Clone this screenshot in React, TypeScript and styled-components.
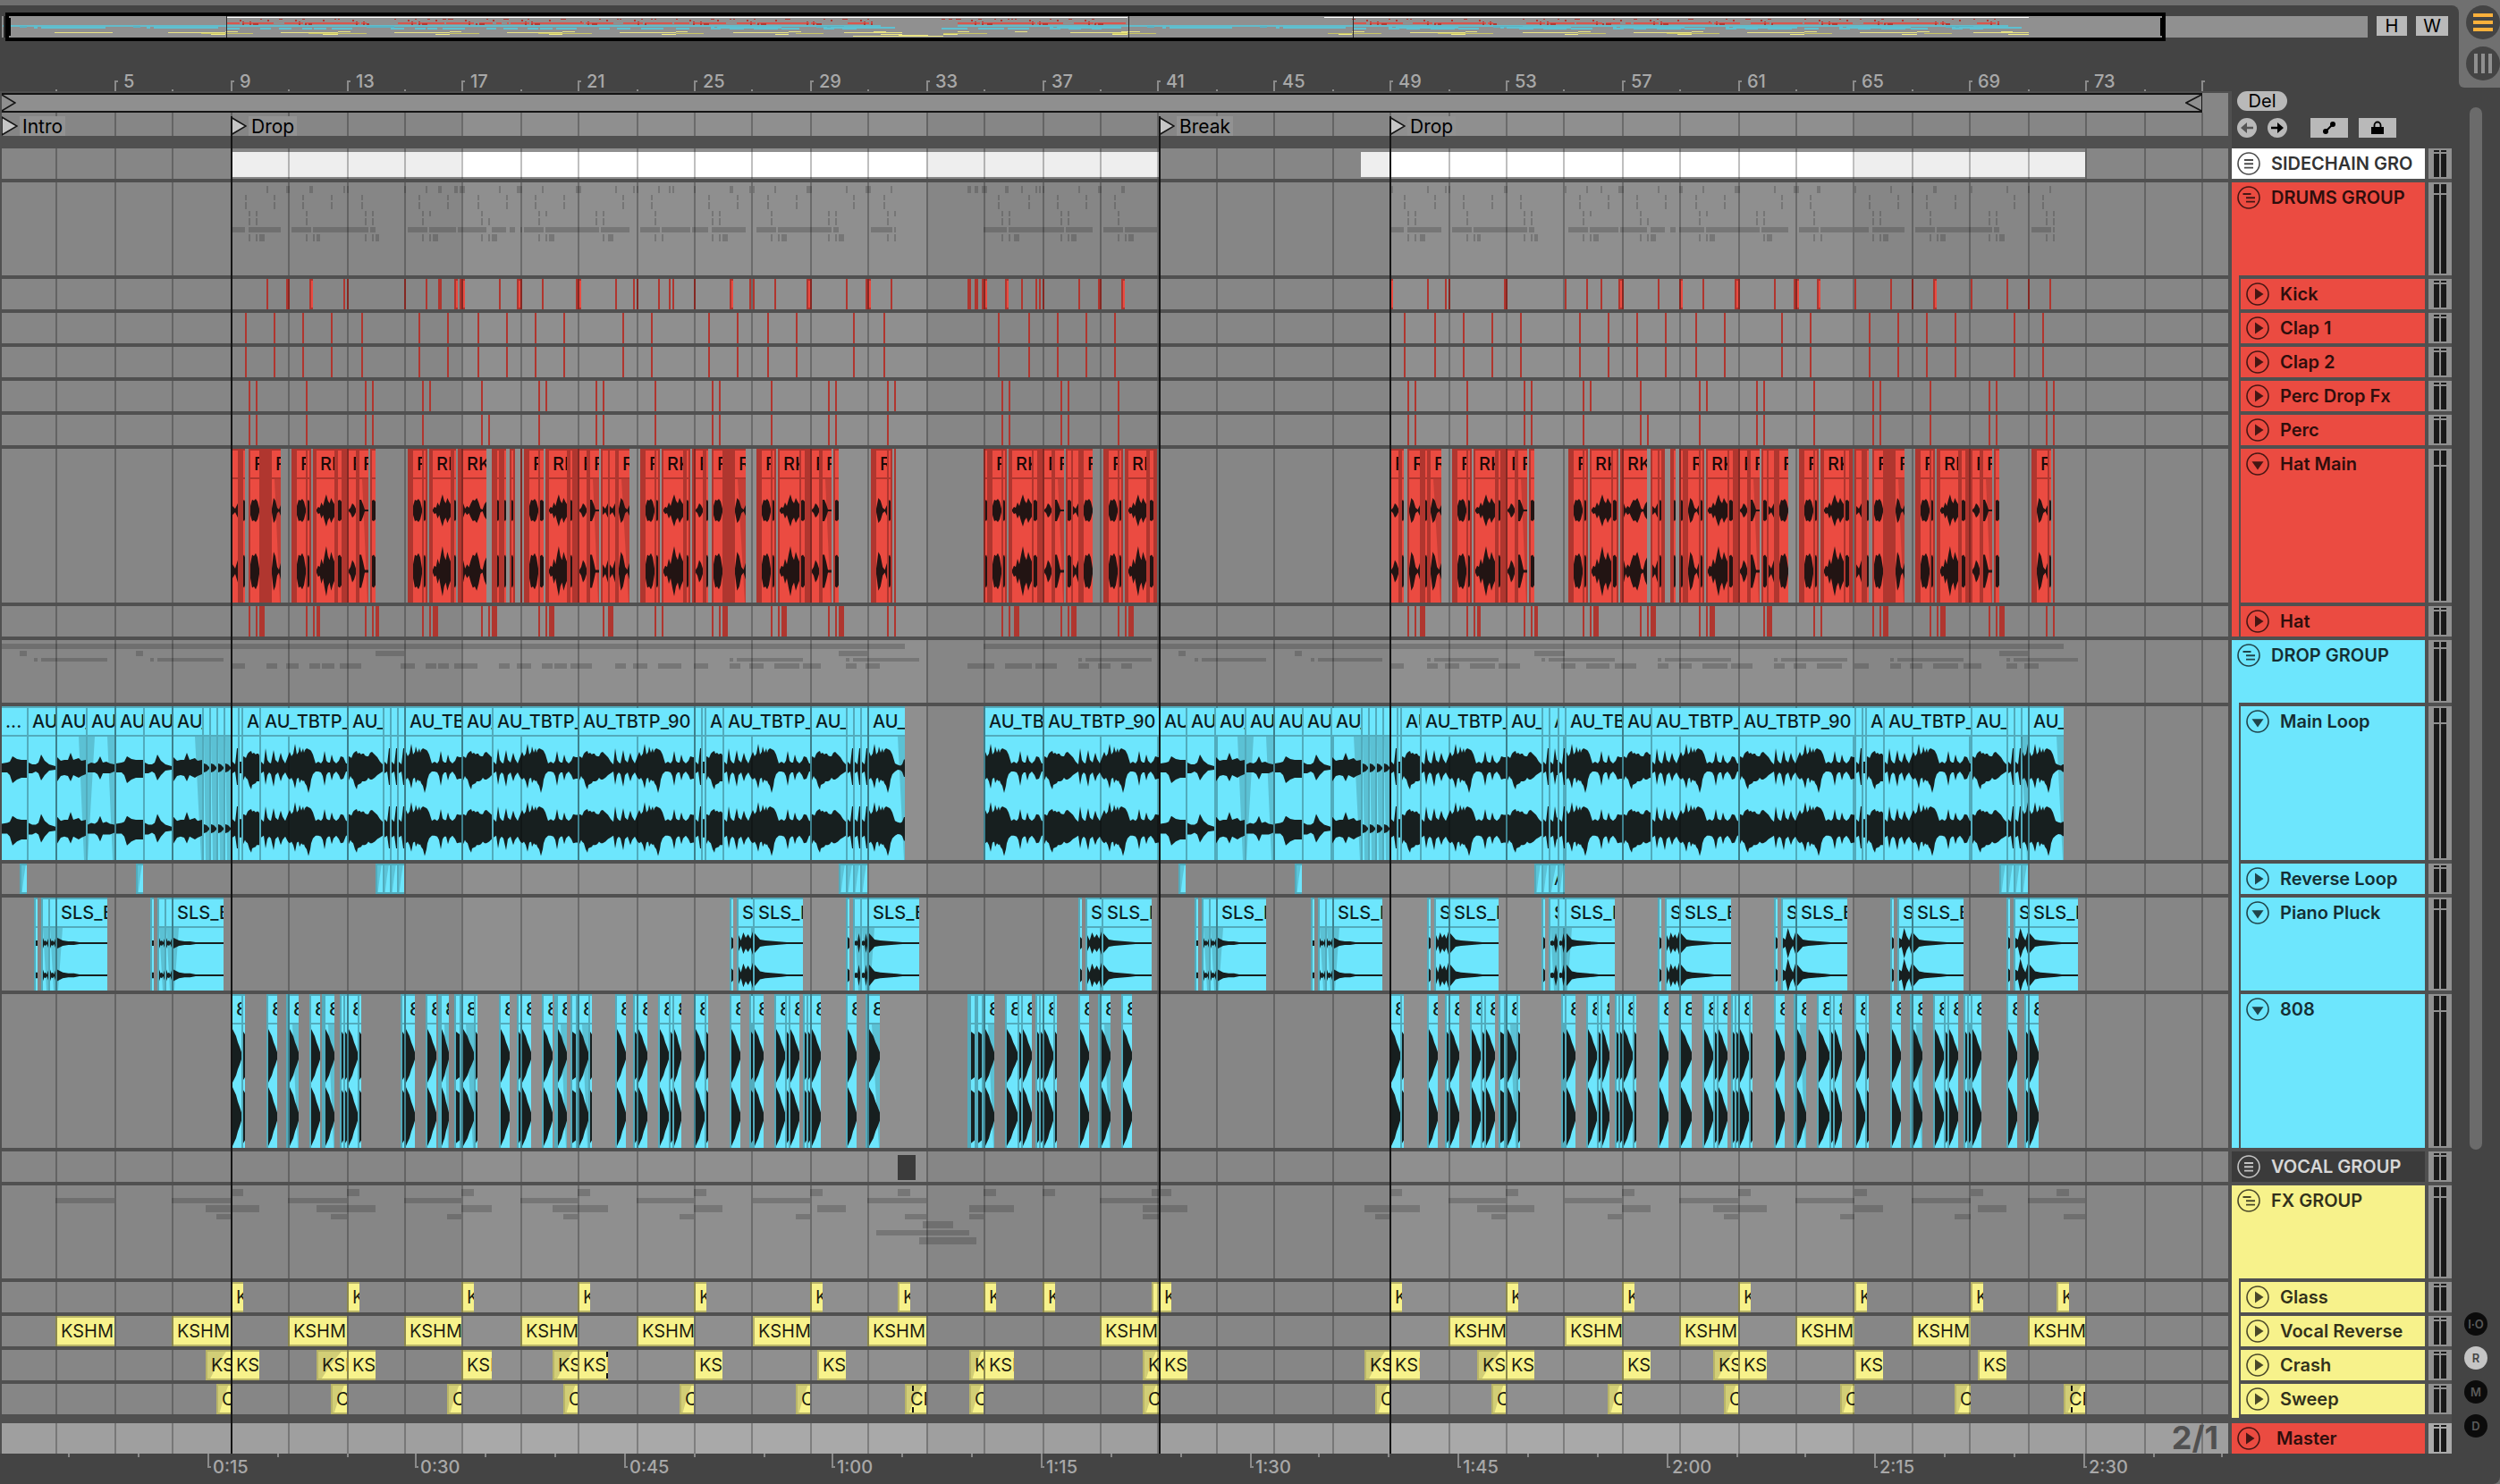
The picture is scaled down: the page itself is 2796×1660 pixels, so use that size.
import React from "react";
import styled, { createGlobalStyle } from "styled-components";

/* ---------- palette ---------- */
const c = {
  frame: "#707070",
  panel: "#444444",
  gap: "#505050",
  lane: "#8f8f8f",
  laneDim: "#868686",
  ink: "#171f1f",
  control: "#b9b9b9",
  red: "#eb4b41",
  redEdge: "#b0362f",
  blue: "#6de6fd",
  blueEdge: "#52abbc",
  yellow: "#f7f28b",
  yellowEdge: "#b9b568",
};
const sans = `Inter, "Liberation Sans", sans-serif`;

/* ---------- timeline geometry ---------- */
const START = 2;
const SPAN = 2490;
const at = (x: number) => `${((x - START) / SPAN) * 100}%`;
const wide = (w: number) => `${(w / SPAN) * 100}%`;
const even = (v: number) => Math.round(v / 2) * 2;
const barX = (bar: number) => Math.max(START, even(32.42 * (bar - 1) - 2));
const gridBars = Array.from({ length: 38 }, (_, i) => 3 + i * 2);

/* ---------- clip data ---------- */
type Seg = { x: number; w: number; solid: boolean; before: number };

// "326 d6 b10" reads: start at 326, a 6 wide edge, then a 10 wide clip face
const runs = (text: string): Seg[] =>
  text
    .trim()
    .split("|")
    .flatMap((run) => {
      const [head, ...parts] = run.trim().split(/\s+/);
      let x = Number(head);
      let before = 0;
      return parts.map((p) => {
        const w = Number(p.slice(1));
        const seg = { x, w, solid: p[0] === "d", before };
        before = seg.solid ? w : 0;
        x += w;
        return seg;
      });
    });

// every list is: first edge, further cuts, end
const cuts = (...lists: number[][]): Seg[] =>
  lists.flatMap((list) =>
    list.slice(0, -1).flatMap((x, i) => {
      const edge = x === START ? 0 : 2;
      const face = { x: x + edge, w: list[i + 1] - x - edge, solid: false, before: edge };
      return edge ? [{ x, w: 2, solid: true, before: 0 }, face] : [face];
    })
  );

const hits = (text: string): Seg[] =>
  text
    .trim()
    .split(/\s+/)
    .flatMap((item) => {
      const [x, w] = item.split(/[:=]/).map(Number);
      if (!w || item.includes("=")) return [{ x, w: w || 2, solid: true, before: 0 }];
      return cuts([x, x + w]);
    });

const kick = hits(`298 320=4 346:4 384 388 452 476 490=4 508:4 514=2 516:4 558 578:4 582 606 644=2 646:4
 688 708 712 736 748 752 776 816:4 838 842 866 902:4 906 946 968=2 970:4 996 1082=4 1090=4 1098=2 1100:4
 1124:4 1142 1158 1162 1166 1206 1228=4 1254:4 1554:4 1596 1616 1620 1682=4 1750 1774 1790 1810:4 1814
 1854 1878:4 1904 1940:4 1944 1984 2006=2 2008:4 2032:4 2074 2114 2138 2162:4 2204 2244 2268 2292`);
const clap = hits(`274 306 338 370 404 468 500 534 566 598 630 696 728 792 824 858 890 954 988 1116 1150 1182
 1214 1246 1570 1604 1636 1668 1700 1766 1798 1830 1862 1896 1928 1992 2024 2090 2122 2154 2186 2252 2284`);
const percFx = hits(`278 286 342 408 416 472 480 538 602 610 666 674 732 796 804 862 926 934 992 1000 1120 1128
 1186 1194 1250 1574 1582 1640 1704 1712 1770 1778 1834 1900 1908 1964 1972 2028 2094 2102 2158 2224 2232 2288 2296`);
const perc = hits(`278 286 342 408 416 472 538 546 602 666 674 732 796 804 862 926 934 992 1120 1128 1186 1194
 1250 1574 1582 1640 1704 1712 1770 1834 1842 1900 1964 1972 2028 2094 2102 2158 2224 2232 2288 2296`);
const hat = hits(`278 286 290=6 342 350 354=4 408 416 420=4 472 480 484=6 538 546 550=6 602 610 614=6 674 680=6
 732 740 796 804 808=6 862 870 874=6 926 934 938=6 992 1000 1120 1128 1134=6 1186 1194 1198=6 1250 1258 1262=6
 1574 1582 1588=6 1640 1648 1652=4 1704 1712 1716=4 1770 1778 1782=6 1834 1842 1846=6 1900 1908 1912=6 1972
 1976=6 2028 2036 2094 2102 2106=6 2158 2166 2170=6 2224 2232 2236=6 2288 2296`);
const hatMain = runs(`260 b6 d6 b2 | 278 d2 b10 d14 b10 | 326 d6 b10 d2 b2 d2 | 350 d4 b20 d4 b4 d8 b8 d4 b10 |
 414 d2 b4 | 456 d6 b10 d2 b2 d2 | 480 d4 b20 d4 b2 | 512 d6 b26 | 550 d6 b2 d6 b2 | 570 d2 b2 d2 | 582 d2 |
 586 d6 b10 d2 b4 | 610 d4 b20 d4 b2 d8 b8 d4 b10 | 672 d2 b6 d2 b6 d4 b12 | 716 d6 b10 d2 b2 d2 |
 740 d2 b22 d4 b2 d2 | 774 d4 b8 d4 b2 | 796 d2 b10 d14 b12 | 846 d6 b10 d2 b2 d2 |
 870 d2 b22 d2 b4 d8 b8 d4 b10 | 932 d2 b4 | 974 d6 b12 d2 b2 d2 | 1000 d2 | 1100 d2 b2 d6 b10 d2 b2 d2 |
 1128 d4 b22 d2 b4 d8 b8 d4 b10 | 1192 d2 b4 d2 b6 d6 b10 | 1234 d6 b10 d2 b2 d2 | 1258 d4 b20 d4 b4 d4 |
 1556 b8 d4 b2 | 1574 d2 b12 d6 b2 d4 b12 | 1624 d6 b10 d2 b2 d2 | 1648 d2 b22 d4 b2 d8 b8 d4 b10 |
 1710 d2 b4 | 1754 d6 b10 d2 b2 d2 | 1778 d2 b22 d2 b4 d2 | 1812 d4 b26 | 1846 d2 b6 d2 b2 d4 | 1868 d4 b2 |
 1878 d2 b2 d6 b12 d2 b2 d2 | 1908 d2 b22 d2 b4 d8 b8 d4 b10 | 1970 d2 b4 d2 b6 d6 b10 |
 2012 d6 b10 d2 b2 d2 | 2036 d4 b22 d2 b4 d4 | 2074 d2 b6 d6 b2 | 2094 d2 b10 d14 b10 |
 2142 d6 b10 d2 b2 d2 | 2166 d4 b20 d4 b4 d8 b8 d4 b10 | 2230 d2 b4 | 2272 d6 b12 d2 b2 | 2296 d2`);
const mainLoop = cuts(
  [2, 30, 62, 96, 128, 160, 192, 226, 234, 242, 250, 258, 266, 270, 290, 388, 428, 436, 444, 452, 516, 550,
    646, 776, 784, 788, 808, 906, 946, 954, 962, 970, 1012],
  [1100, 1166, 1296, 1326, 1358, 1392, 1424, 1456, 1488, 1522, 1530, 1538, 1546, 1554, 1562, 1566, 1588, 1684,
    1724, 1732, 1742, 1750, 1814, 1846, 1944, 2074, 2082, 2086, 2106, 2204, 2244, 2252, 2260, 2268, 2308]
);
const reverse = cuts([22, 30], [152, 160], [420, 428, 436, 444, 452], [938, 946, 954, 962, 970], [1318, 1326],
  [1448, 1456], [1716, 1724, 1732, 1742, 1750], [2236, 2244, 2252, 2260, 2268]);
const piano = cuts([38, 42], [46, 54, 62, 120], [168, 172], [176, 184, 192, 250], [816, 820], [824, 842, 898],
  [946, 950], [954, 962, 970, 1028], [1206, 1210], [1214, 1232, 1288], [1336, 1340], [1344, 1352, 1360, 1416],
  [1466, 1470], [1474, 1482, 1490, 1546], [1596, 1600], [1604, 1620, 1676], [1724, 1728], [1732, 1742, 1750, 1806],
  [1854, 1858], [1862, 1878, 1936], [1984, 1988], [1992, 2008, 2066], [2114, 2118], [2122, 2138, 2196],
  [2244, 2248], [2252, 2268, 2324]);
const bass = runs(`260 b10 d2 b2 | 298 d2 b10 | 320 d4 b10 | 346 d2 b10 | 360 d4 b10 | 380 d2 b2 d2 b2 d2 b10 d2 b2 |
 448 d2 b2 d2 b10 | 476 d2 b10 | 490 d4 b8 | 508 d2 b4 d4 b12 d2 b2 | 558 d2 b10 | 578 d2 b2 d2 b10 |
 606 d2 b10 | 620 d4 b10 | 638 d2 b4 d4 b10 d2 b2 | 688 d2 b10 | 708 d2 b2 d2 b10 | 736 d2 b10 d2 b2 d2 b8 |
 776 d2 b10 d2 b2 | 816 d2 b10 | 838 d2 b2 d2 b10 | 866 d2 b10 d2 b2 d2 b10 | 898 d2 b2 d2 b2 d2 b10 |
 946 d2 b10 | 968 d4 b12 | 1082 d4 b4 d4 b4 d4 b10 | 1124 d2 b12 d2 b2 d2 b10 | 1158 d2 b2 d2 b2 d2 b10 d2 b2 |
 1206 d2 b10 | 1228 d4 b10 | 1254 d2 b10 | 1556 b10 d2 b2 | 1596 d2 b10 | 1616 d2 b2 d2 b10 |
 1644 d2 b10 d2 b2 d2 b10 | 1676 d2 b4 d4 b10 d2 b2 | 1746 d2 b2 d2 b10 | 1774 d2 b10 d2 b2 d2 b8 |
 1806 d2 b2 d2 b2 d2 b10 d2 b2 | 1854 d2 b10 | 1878 d2 b12 | 1904 d2 b10 d2 b2 d2 b10 |
 1936 d2 b2 d2 b2 d2 b10 d2 b2 | 1984 d2 b10 | 2006 d4 b10 | 2032 d2 b12 d2 b2 d2 b8 | 2074 d2 b10 d2 b2 |
 2114 d2 b10 | 2136 d4 b10 | 2162 d2 b10 d2 b2 d2 b10 | 2196 d2 b2 d2 b2 d2 b10 | 2244 d2 b10 | 2264 d2 b2 d2 b10`);
const glass = cuts([258, 272], [388, 402], [516, 530], [646, 660], [776, 790], [906, 920], [1004, 1018], [1100, 1114],
  [1166, 1180], [1288, 1296, 1310], [1554, 1568], [1684, 1698], [1814, 1828], [1944, 1958], [2074, 2088],
  [2204, 2218], [2300, 2314]);
const vocalReverse = cuts([62, 128], [192, 258], [322, 388], [452, 516], [582, 646], [712, 776], [842, 906],
  [970, 1036], [1230, 1296], [1620, 1684], [1750, 1814], [1878, 1944], [2008, 2074], [2138, 2204], [2268, 2332]);
const crash = cuts([230, 258, 290], [354, 388, 420], [516, 550], [618, 646, 680], [776, 808], [914, 946],
  [1084, 1100, 1134], [1278, 1296, 1328], [1526, 1554, 1588], [1652, 1684, 1716], [1814, 1846], [1916, 1944, 1976],
  [2074, 2106], [2212, 2244]);
const crashFades = [230, 354, 618, 1084, 1278, 1526, 1652, 1916];
const sweep = cuts([242, 258], [370, 388], [500, 516], [630, 646], [760, 776], [890, 906], [1012, 1036], [1084, 1100],
  [1278, 1296], [1538, 1554], [1668, 1684], [1798, 1814], [1928, 1944], [2058, 2074], [2186, 2204], [2308, 2332]);
const fxExtra = [[[1032, 1066]], [[980, 1084]], [[1028, 1092]]];
const sidechain: [number, number, string][] = [
  [260, 516, "#eeeeee"], [516, 1036, "#ffffff"], [1036, 1296, "#eeeeee"],
  [1522, 1554, "#eeeeee"], [1554, 2074, "#ffffff"], [2074, 2332, "#eeeeee"],
];

const spans = (segs: Seg[]): number[][] =>
  segs.reduce<number[][]>((out, s) => {
    const last = out[out.length - 1];
    if (last && s.x <= last[1]) last[1] = Math.max(last[1], s.x + s.w);
    else out.push([s.x, s.x + s.w]);
    return out;
  }, []);

/* ---------- wave forms ---------- */
type Point = [number, number, number];
// offset, upper and lower amplitude over four bars of the loop
const loop: Point[] = [
  [0, 13, 14], [2, 12, 9], [3, 11, 11], [5, 16, 13], [7, 18, 20], [9, 19, 24], [10, 16, 19], [12, 17, 18], [14, 15, 17],
  [15, 16, 15], [17, 16, 15], [18, 14, 15], [20, 13, 14], [22, 13, 11], [24, 17, 13], [26, 18, 13], [29, 15, 11],
  [32, 12, 8], [35, 7, 6], [38, 4, 4], [40, 22, 19], [42, 9, 8], [44, 6, 5], [46, 5, 7], [49, 20, 21], [51, 9, 8],
  [54, 6, 5], [57, 17, 15], [59, 10, 9], [62, 5, 5], [65, 13, 11], [67, 18, 13], [69, 13, 11], [71, 16, 15],
  [73, 27, 23], [75, 15, 12], [77, 18, 11], [78, 24, 17], [80, 17, 13], [82, 22, 15], [83, 17, 14], [84, 20, 17],
  [86, 22, 20], [88, 21, 28], [90, 20, 20], [91, 19, 13], [93, 15, 7], [96, 5, 4], [99, 7, 4], [102, 5, 5],
  [104, 8, 9], [106, 19, 20], [108, 8, 8], [110, 6, 5], [112, 6, 5], [114, 15, 14], [116, 8, 7], [119, 5, 4],
  [122, 8, 8], [124, 13, 13], [127, 12, 12], [130, 5, 4],
];
const intro: Point[][] = [
  [[0, 5, 5], [6, 6, 5], [9, 7, 8], [12, 13, 17], [17, 10, 13], [22, 9, 11], [28, 9, 11]],
  [[0, 6, 6], [4, 4, 6], [8, 4, 4], [11, 6, 6], [14, 15, 14], [18, 8, 8], [23, 4, 3], [30, 2, 2]],
  [[0, 12, 15], [4, 8, 9], [8, 9, 8], [12, 9, 9], [15, 17, 15], [18, 9, 8], [24, 11, 11], [27, 8, 9], [32, 9, 7]],
  [[0, 4, 5], [4, 6, 5], [8, 5, 5], [11, 7, 7], [14, 13, 13], [17, 6, 6], [21, 7, 6], [25, 5, 6], [30, 4, 4]],
];
const even2 = (values: number[], w: number): Point[] =>
  values.map((v, i) => [(i * w) / (values.length - 1), v, v] as Point);

const outline = (x: number, w: number, pts: Point[], mid: number, gain: number, floor: number) => {
  const kept = pts.filter((p) => p[0] <= w);
  const last = kept[kept.length - 1];
  if (last[0] < w) kept.push([w, last[1], last[2]]);
  const up = kept.map((p) => `${x + p[0] - START},${(mid - p[1] * gain - floor).toFixed(1)}`);
  const down = kept.map((p) => `${x + p[0] - START},${(mid + p[2] * gain + floor).toFixed(1)}`).reverse();
  return `M${[...up, ...down].join("L")}Z`;
};
const stereo = (x: number, w: number, pts: Point[], mids: number[], gain = 1, floor = 0) =>
  outline(x, w, pts, mids[0], 1, 0) + outline(x, w, pts, mids[1], gain, floor);
const fade = (a: number, b: number, d: number, e: number, h: number) =>
  `M${a - START},34L${b - START},34L${e - START},${h}L${d - START},${h}Z`;

type Drawing = { waves: string; fades: string };
const MIDS = [69, 137];

const drawHat = (): Drawing => {
  let waves = "";
  let fades = "";
  hatMain.filter((s) => !s.solid).forEach(({ x, w, before }) => {
    let v = [11, 12, 10];
    if (w >= 26) v = [8, 2, 5, 3, 8, 12, 11, 14, 9, 2, 1, 7, 10];
    else if (w >= 20) v = [1, 4, 3, 9, 5, 12, 18, 11, 8, 14, 10, 7];
    else if (w >= 10 && (before === 14 || w === 12)) v = [2, 14, 11, 3, 1, 6];
    else if (w === 10 && before === 4) v = [12, 12, 7, 1, 1, 1];
    else if (w >= 10) v = [5, 12, 11, 13, 10, 2];
    else if (w === 8) v = [1, 3, 8, 6, 2];
    else if (w === 6) v = [5, 2, 8];
    waves += stereo(x, w, even2(v, w), MIDS, 1.55);
    if (w >= 10 && w <= 12 && (before === 4 || before === 14))
      fades += fade(x + 3, x + w, x + w - 1, x + w, 172);
  });
  return { waves, fades };
};

const drawLoop = (): Drawing => {
  let waves = "";
  let fades = "";
  let bar = 0;
  mainLoop.filter((s) => !s.solid).forEach(({ x, w }) => {
    const inIntro = x < 258 || (x > 1296 && x < 1554);
    if (inIntro && w < 10) {
      waves += stereo(x, w, [[0, 5, 5], [3, 4, 4], [6, 1, 1]], MIDS);
      fades += fade(x, x + w, x + w - 1, x + w, 172) + fade(x, x + 4, x + 2, x + w, 172);
      bar = 0;
      return;
    }
    if (inIntro) {
      waves += stereo(x, w, intro[bar % 4], MIDS, 1.1);
      if (bar === 2) fades += fade(x + w - 8, x + w, x + w - 2, x + w, 172);
      if (bar === 3) fades += fade(x, x + 8, x, x, 172) + fade(x + w - 8, x + w, x + w - 2, x + w, 172);
      if (bar === 6) fades += fade(x + w - 8, x + w, x + w - 1, x + w, 172);
      bar += 1;
      return;
    }
    let from = 0;
    const tail = x > 2260 || (x > 968 && x < 1012);
    if (w > 90 && w < 100) from = 35;
    else if ((w > 60 && w < 70) || tail) from = 67;
    else if (w < 9) from = 35;
    const pts = loop
      .filter((p) => p[0] >= from)
      .map((p) => [p[0] - from, p[1], p[2]] as Point);
    if (pts[0][0] > 0) pts.unshift([0, pts[0][1], pts[0][2]]);
    const shaped = tail
      ? pts.map((p) => (p[0] > 30 ? ([p[0], p[1] * 0.5, p[2] * 0.5] as Point) : p))
      : pts;
    if (tail) fades += fade(x + w - 8, x + w, x + w - 1, x + w, 172);
    waves += stereo(x, w, shaped, MIDS, 0.95, 4);
  });
  return { waves, fades };
};

const drawPiano = (): Drawing => {
  let waves = "";
  let fades = "";
  const mids = [51, 87];
  const faces = piano.filter((s) => !s.solid);
  faces.forEach(({ x, w }, i) => {
    const soft = i > 0 && faces[i - 1].w < 10;
    const quiet = x < 260 || (x > 1296 && x < 1554);
    let v = [3, 3];
    if (w > 30) v = quiet ? [6, 3, 2, 2, 1, 1, 1, 1, 1, 1] : [11, 4, 3, 2.5, 2, 1.5, 1, 1, 1, 1];
    else if (w > 12) v = x > 1980 ? [6, 4, 17, 8, 3, 12] : [9, 3, 12, 6, 10, 5, 13];
    else if (w > 4) v = quiet ? [6, 2, 3, 1, 5] : [2, 3, 2, 11, 3];
    else if (!quiet) v = [7, 5];
    waves += stereo(x, w, even2(v, w), mids, 1.1);
    if (w > 2 && w < 10) fades += fade(x, x + w, x + w - 1, x + w, 104) + fade(x, x + w, x + 4, x + w, 104);
    if (w > 30 && soft) fades += fade(x, x + 6, x, x + 1, 104);
  });
  return { waves, fades };
};

const drawBass = (): Drawing => {
  let waves = "";
  let fades = "";
  bass.filter((s) => !s.solid).forEach(({ x, w, before }) => {
    const v = w > 4 ? [30, 26, 22, 15, 10, 4] : [27, 24];
    waves += stereo(x, w, even2(v, w), MIDS, 1.1);
    if (w >= 8 && before === 4) fades += fade(x + 3, x + w, x + w - 1, x + w, 172);
  });
  return { waves, fades };
};

/* ---------- tracks ---------- */
type Tone = { fill: string; edge: string };
const red: Tone = { fill: c.red, edge: c.redEdge };
const blue: Tone = { fill: c.blue, edge: c.blueEdge };
const yellow: Tone = { fill: c.yellow, edge: c.yellowEdge };
const white: Tone = { fill: "#ffffff", edge: "#eeeeee" };
const dark: Tone = { fill: "#3b3b3b", edge: "#3b3b3b" };

type Track = {
  name: string;
  tone: Tone;
  height: number;
  peak: number;
  icon: "closed" | "open" | "play" | "down";
  child?: boolean;
  last?: boolean;
  clips?: Seg[];
  label?: string;
  drawing?: Drawing;
  rows?: number[][][];
  blocks?: [number, number, string][];
  fadeAll?: boolean;
  fadeAt?: number[];
  marks?: number[];
};

const tracks: Track[] = [
  { name: "SIDECHAIN GRO", tone: white, height: 34, peak: 2, icon: "closed", blocks: sidechain },
  { name: "DRUMS GROUP", tone: red, height: 104, peak: 10, icon: "open",
    rows: [kick, clap, clap, percFx, perc, hatMain, hat].map(spans) },
  { name: "Kick", tone: red, height: 34, peak: 2, icon: "play", child: true, clips: kick },
  { name: "Clap 1", tone: red, height: 34, peak: 2, icon: "play", child: true, clips: clap },
  { name: "Clap 2", tone: red, height: 34, peak: 2, icon: "play", child: true, clips: clap },
  { name: "Perc Drop Fx", tone: red, height: 34, peak: 2, icon: "play", child: true, clips: percFx },
  { name: "Perc", tone: red, height: 34, peak: 2, icon: "play", child: true, clips: perc },
  { name: "Hat Main", tone: red, height: 172, peak: 16, icon: "down", child: true, clips: hatMain, label: "RK", drawing: drawHat() },
  { name: "Hat", tone: red, height: 34, peak: 2, icon: "play", child: true, clips: hat },
  { name: "DROP GROUP", tone: blue, height: 70, peak: 6, icon: "open",
    rows: [mainLoop, reverse, piano, bass].map(spans) },
  { name: "Main Loop", tone: blue, height: 172, peak: 16, icon: "down", child: true, clips: mainLoop, label: "AU_TBTP_90", drawing: drawLoop() },
  { name: "Reverse Loop", tone: blue, height: 34, peak: 2, icon: "play", child: true, clips: reverse, label: "A", fadeAll: true },
  { name: "Piano Pluck", tone: blue, height: 104, peak: 10, icon: "down", child: true, clips: piano, label: "SLS_B", drawing: drawPiano() },
  { name: "808", tone: blue, height: 172, peak: 16, icon: "down", child: true, clips: bass, label: "808", drawing: drawBass() },
  { name: "VOCAL GROUP", tone: dark, height: 34, peak: 2, icon: "closed", blocks: [[1004, 1024, "#3b3b3b"]] },
  { name: "FX GROUP", tone: yellow, height: 104, peak: 10, icon: "open",
    rows: [...[glass, vocalReverse, crash, sweep].map(spans), ...fxExtra] },
  { name: "Glass", tone: yellow, height: 34, peak: 2, icon: "play", child: true, clips: glass, label: "KS" },
  { name: "Vocal Reverse", tone: yellow, height: 34, peak: 2, icon: "play", child: true, clips: vocalReverse, label: "KSHMR" },
  { name: "Crash", tone: yellow, height: 34, peak: 2, icon: "play", child: true, clips: crash, label: "KSH", fadeAt: crashFades, marks: [678] },
  { name: "Sweep", tone: yellow, height: 34, peak: 2, icon: "play", child: true, last: true, clips: sweep, label: "CR", fadeAll: true, marks: [1020, 2316] },
];

const miniRows = [[4, 8], [14, 6], [22, 8], [32, 6], [40, 8], [50, 6], [58, 8]];
const miniRowsShort = [[4, 6], [12, 6], [20, 4], [26, 6]];
const locators = [
  { x: 2, name: "Intro" },
  { x: 258, name: "Drop" },
  { x: 1296, name: "Break" },
  { x: 1554, name: "Drop" },
];
const seconds = Array.from({ length: 32 }, (_, i) => i + 1);

/* ---------- styles ---------- */
const Global = createGlobalStyle`
  *, *::before, *::after { box-sizing: border-box; }
  body { margin: 0; background: ${c.frame}; font-family: ${sans}; font-size: 20px; line-height: 24px; color: #000; }
  button { margin: 0; padding: 0; border: 0; font: inherit; color: inherit; background: none; cursor: pointer; }
  svg { display: block; }
`;
const Window = styled.div`
  display: grid;
  grid-template-columns: minmax(0, 1fr) 46px;
  min-height: 100vh;
  padding-top: 6px;
  background: ${c.frame};
`;
const Main = styled.main`
  display: flex;
  flex-direction: column;
  min-width: 0;
  background: ${c.panel};
  border-top-right-radius: 8px;
`;
const OverviewBar = styled.header`
  display: grid;
  grid-template-columns: minmax(0, 1fr) 34px 36px;
  column-gap: 10px;
  align-items: start;
  padding: 12px 12px 8px 2px;
`;
const Overview = styled.div`
  position: relative;
  height: 24px;
  background: #909090;
`;
const OverviewMap = styled.svg`
  width: 100%;
  height: 24px;
`;
const ViewFrame = styled.div`
  position: absolute;
  top: -4px;
  bottom: -4px;
  left: 4px;
  width: 91.3%;
  border: 4px solid #000;
  &::before,
  &::after {
    content: "";
    position: absolute;
    top: 2px;
    bottom: 2px;
    width: 2px;
    background: #000;
  }
  &::before { left: 0; }
  &::after { right: 0; }
`;
const SquareButton = styled.button`
  height: 22px;
  font-size: 20px;
  line-height: 22px;
  background: ${c.control};
  display: grid;
  place-items: center;
`;
const Ruler = styled.div`
  height: 52px;
  padding-right: 258px;
`;
const RulerTrack = styled.div`
  position: relative;
  height: 100%;
  margin-left: 2px;
`;
const Tick = styled.span<{ $major?: boolean }>`
  position: absolute;
  bottom: 0;
  height: ${(p) => (p.$major ? 12 : 2)}px;
  width: ${(p) => (p.$major ? 4 : 2)}px;
  border-left: 2px solid #8a8a8a;
  border-top: ${(p) => (p.$major ? "2px solid #8a8a8a" : "0")};
`;
const TickLabel = styled.span`
  position: absolute;
  bottom: -1px;
  padding-left: 10px;
  font-weight: 500;
  color: #a8a8a8;
`;
const Arrangement = styled.section`
  position: relative;
  padding: 2px 8px 0 0;
  background: linear-gradient(to right, ${c.gap} calc(100% - 8px), ${c.panel} calc(100% - 8px));
`;
const Row = styled.div`
  display: grid;
  grid-template-columns: minmax(0, 1fr) 216px 26px;
  column-gap: 4px;
  padding-left: 2px;
`;
const banded = (lit: string, dim: string) =>
  `linear-gradient(to right, ${dim} ${at(516)}, ${lit} ${at(516)} ${at(1036)}, ${dim} ${at(1036)} ${at(1554)}, ${lit} ${at(1554)} ${at(2074)}, ${dim} ${at(2074)})`;
const NavRow = styled.div`
  display: grid;
  grid-template-columns: minmax(0, 1fr) 250px;
  padding-left: 2px;
`;
const NavLanes = styled.div`
  display: flex;
  flex-direction: column;
  padding-bottom: 14px;
`;
const LoopLane = styled.div`
  height: 22px;
  background: ${c.laneDim};
`;
const LoopBrace = styled.button`
  width: 98.85%;
  height: 22px;
  display: flex;
  justify-content: space-between;
  background: ${c.lane};
  border-top: 2px solid #141414;
  border-bottom: 2px solid #141414;
  border-right: 1px solid #141414;
`;
const LocatorLane = styled.div`
  position: relative;
  isolation: isolate;
  height: 26px;
  background: ${banded(c.lane, c.laneDim)};
`;
const LocatorButton = styled.button`
  position: absolute;
  z-index: 2;
  top: 4px;
  display: flex;
  gap: 2px;
  height: 22px;
  line-height: 23px;
`;
const LocatorName = styled.span`
  padding: 0 3px;
  font-size: 21px;
  background: #929292;
`;
const LocatorLines = styled.div`
  position: absolute;
  z-index: 3;
  top: 28px;
  bottom: 0;
  left: 2px;
  right: 258px;
  pointer-events: none;
`;
const LocatorLine = styled.i`
  position: absolute;
  top: 0;
  bottom: 0;
  width: 2px;
  background: #141414;
`;
const NavControls = styled.div`
  margin: -2px 0 0 4px;
  padding-left: 6px;
  display: flex;
  flex-direction: column;
  gap: 8px;
  background: ${c.panel};
`;
const ControlLine = styled.div`
  display: flex;
  align-items: center;
`;
const PillButton = styled.button`
  width: 56px;
  height: 22px;
  border-radius: 11px;
  font-size: 20px;
  line-height: 22px;
  background: ${c.control};
`;
const RoundButton = styled.button`
  width: 22px;
  height: 22px;
  margin-right: 12px;
  border-radius: 50%;
  background: ${c.control};
`;
const ModeButton = styled(SquareButton)`
  width: 42px;
  margin: 0 -2px 0 14px;
`;
const TrackList = styled.div`
  display: flex;
  flex-direction: column;
  gap: 4px;
`;
const Lane = styled.div<{ $height: number; $main?: boolean }>`
  position: relative;
  isolation: isolate;
  overflow: hidden;
  height: ${(p) => p.$height}px;
  background: ${(p) => (p.$main ? banded("#a9a9a9", "#9f9f9f") : banded(c.lane, c.laneDim))};
`;
const GridLine = styled.i`
  position: absolute;
  z-index: 1;
  top: 0;
  bottom: 0;
  width: 2px;
  background: rgba(0, 0, 0, 0.25);
`;
const Edge = styled.i<{ $tone: Tone }>`
  position: absolute;
  top: 0;
  bottom: 0;
  background: ${(p) => p.$tone.edge};
`;
const Face = styled.div<{ $tone: Tone; $folded: boolean }>`
  position: absolute;
  top: 0;
  bottom: 0;
  overflow: hidden;
  background: ${(p) => p.$tone.fill};
  border-top: 2px solid ${(p) => p.$tone.edge};
  border-bottom: ${(p) => (p.$folded ? `2px solid ${p.$tone.edge}` : "0")};
`;
const ClipTitle = styled.span<{ $tone: Tone; $folded: boolean }>`
  position: relative;
  z-index: 2;
  display: block;
  overflow: hidden;
  height: ${(p) => (p.$folded ? 30 : 32)}px;
  padding-left: 4px;
  line-height: 31px;
  font-weight: ${(p) => (p.$folded ? 400 : 500)};
  white-space: nowrap;
  color: rgba(0, 0, 0, 0.88);
  background: ${(p) => (p.$folded ? "none" : p.$tone.fill)};
  border-bottom: ${(p) => (p.$folded ? "0" : `2px solid ${p.$tone.edge}`)};
`;
const FadeShape = styled.i`
  position: absolute;
  inset: 0;
  background: rgba(0, 0, 0, 0.15);
  clip-path: polygon(0 0, 80% 0, 45% 45%, 12% 100%, 0 100%);
`;
const ClipMark = styled.i`
  position: absolute;
  z-index: 2;
  top: 2px;
  bottom: 2px;
  width: 2px;
  background: linear-gradient(#111 6px, transparent 6px calc(100% - 6px), #111 calc(100% - 6px));
`;
const WaveLayer = styled.svg`
  position: absolute;
  inset: 0;
  width: 100%;
  height: 100%;
`;
const Block = styled.i<{ $color: string }>`
  position: absolute;
  top: 4px;
  bottom: 2px;
  background: ${(p) => p.$color};
`;
const Mini = styled.i<{ $top: number; $height: number }>`
  position: absolute;
  top: ${(p) => p.$top}px;
  height: ${(p) => p.$height}px;
  background: rgba(0, 0, 0, 0.17);
`;
const Header = styled.div<{ $child?: boolean; $last?: boolean; $tone: Tone; $gap?: number }>`
  position: relative;
  display: flex;
  align-items: flex-start;
  gap: ${(p) => p.$gap ?? 12}px;
  margin-left: ${(p) => (p.$child ? 10 : 0)}px;
  padding: 4px 0 0 6px;
  color: ${(p) => (p.$tone === dark ? "#fff" : "#000")};
  background: ${(p) => p.$tone.fill};
  &::before {
    content: ${(p) => (p.$child ? `""` : "none")};
    position: absolute;
    top: -4px;
    bottom: ${(p) => (p.$last ? -4 : 0)}px;
    left: -10px;
    width: 8px;
    background: ${(p) => p.$tone.fill};
  }
`;
const FoldButton = styled.button`
  flex: none;
  width: 26px;
  height: 26px;
  opacity: 0.7;
`;
const TrackName = styled.span`
  flex: 1;
  overflow: hidden;
  white-space: nowrap;
  font-weight: 600;
  line-height: 27px;
  opacity: 0.8;
`;
const Meter = styled.div<{ $main?: boolean }>`
  display: grid;
  grid-template-columns: 6px 6px;
  gap: 2px;
  padding: 2px 6px;
  background: ${(p) => (p.$main ? "#aaaaaa" : "#909090")};
`;
const MeterBar = styled.div`
  display: flex;
  flex-direction: column;
  gap: 2px;
`;
const MeterPeak = styled.i<{ $size: number }>`
  height: ${(p) => p.$size}px;
  background: #191919;
`;
const MeterLevel = styled.i`
  flex: 1;
  background: #191919;
`;
const MasterRow = styled(Row)`
  margin-top: 10px;
`;
const GridSize = styled.span`
  position: absolute;
  z-index: 2;
  right: 11px;
  font-size: 36px;
  font-weight: 700;
  line-height: 32px;
  color: #505050;
`;
const TimeRuler = styled.footer`
  flex: 1;
  min-height: 34px;
  padding-right: 258px;
`;
const TimeTick = styled.span<{ $major?: boolean }>`
  position: absolute;
  top: 0;
  height: ${(p) => (p.$major ? 16 : 4)}px;
  width: ${(p) => (p.$major ? 4 : 2)}px;
  border-left: 2px solid #8a8a8a;
  border-bottom: ${(p) => (p.$major ? "2px solid #8a8a8a" : "0")};
`;
const TimeLabel = styled.span`
  position: absolute;
  top: 3px;
  padding-left: 6px;
  font-weight: 500;
  color: #a8a8a8;
`;
const Side = styled.aside`
  display: flex;
  flex-direction: column;
  background: ${c.panel};
  border-bottom-right-radius: 8px;
`;
const ViewButtons = styled.div`
  display: flex;
  flex-direction: column;
  gap: 8px;
  height: 92px;
  padding-left: 8px;
  background: ${c.frame};
  border-bottom-left-radius: 6px;
`;
const ViewButton = styled.button`
  width: 38px;
  height: 38px;
  border-radius: 50%;
  background: ${c.panel};
`;
const SideBody = styled.div`
  flex: 1;
  display: flex;
  flex-direction: column;
  align-items: center;
  width: 38px;
  padding: 22px 0 52px;
`;
const ScrollThumb = styled.div`
  flex: 1;
  width: 14px;
  margin-bottom: 182px;
  border-radius: 7px;
  background: #6b6b6b;
`;
const Toggles = styled.div`
  display: flex;
  flex-direction: column;
  gap: 12px;
`;
const Toggle = styled.button<{ $on?: boolean }>`
  width: 26px;
  height: 26px;
  border-radius: 50%;
  font-size: 13px;
  font-weight: 600;
  line-height: 26px;
  color: ${(p) => (p.$on ? "#444" : "#5a5a5a")};
  background: ${(p) => (p.$on ? "#c5c5c5" : "#0b0b0b")};
`;

/* ---------- parts ---------- */
const GridLines = () => (
  <>
    {gridBars.map((b) => (
      <GridLine key={b} style={{ left: at(barX(b)) }} />
    ))}
  </>
);

const FoldIcon = ({ kind }: { kind: Track["icon"] }) => (
  <svg viewBox="0 0 26 26" width="26" height="26" fill="none" stroke="currentColor" strokeWidth="1.6">
    <circle cx="13" cy="13" r="12" />
    {kind === "play" && <path d="M10 6.5L19.5 13L10 19.5Z" fill="currentColor" stroke="none" />}
    {kind === "down" && <path d="M6.5 10.3H19.5L13 19.5Z" fill="currentColor" stroke="none" />}
    {kind === "closed" && <path d="M8 9H18M8 13.3H18M8 17.6H18" strokeWidth="1.9" />}
    {kind === "open" && <path d="M6.5 9H15.5M10 13.3H20M10 17.6H20" strokeWidth="1.9" />}
  </svg>
);

const MeterPair = ({ peak, main }: { peak: number; main?: boolean }) => (
  <Meter $main={main}>
    {[0, 1].map((i) => (
      <MeterBar key={i}>
        <MeterPeak $size={peak} />
        <MeterLevel />
      </MeterBar>
    ))}
  </Meter>
);

// only as much of the clip name as its width has room for
const shorten = (label: string, w: number) => (w < 8 ? "" : label.slice(0, Math.ceil((w - 5) / 12)));

const ClipView = ({ seg, track }: { seg: Seg; track: Track }) => {
  const place = { left: at(seg.x), width: wide(seg.w) };
  if (seg.solid) return <Edge $tone={track.tone} style={place} />;
  const folded = !track.drawing;
  const faded = track.fadeAll || track.fadeAt?.includes(seg.x - 2);
  return (
    <Face $tone={track.tone} $folded={folded} style={place}>
      {folded && faded && <FadeShape />}
      <ClipTitle $tone={track.tone} $folded={folded}>
        {seg.x === START ? "..." : shorten(track.label ?? "", seg.w)}
      </ClipTitle>
    </Face>
  );
};

const TrackRow = ({ track }: { track: Track }) => {
  const table = track.height === 70 ? miniRowsShort : miniRows;
  return (
    <Row>
      <Lane $height={track.height}>
        {track.clips?.map((seg, i) => (
          <ClipView key={i} seg={seg} track={track} />
        ))}
        {track.blocks?.map(([a, b, color]) => (
          <Block key={a} $color={color} style={{ left: at(a), width: wide(b - a) }} />
        ))}
        {track.rows?.map((row, r) =>
          row.map(([a, b]) => (
            <Mini key={`${r}-${a}`} $top={table[r][0]} $height={table[r][1]} style={{ left: at(a), width: wide(b - a) }} />
          ))
        )}
        {track.drawing && (
          <WaveLayer viewBox={`0 0 ${SPAN} ${track.height}`} preserveAspectRatio="none" aria-hidden="true">
            <path d={track.drawing.fades} fill="#000" fillOpacity="0.16" />
            <path d={track.drawing.waves} fill={track.tone === red ? "#221413" : c.ink} />
          </WaveLayer>
        )}
        <GridLines />
        {track.marks?.map((m) => (
          <ClipMark key={m} style={{ left: at(m) }} />
        ))}
      </Lane>
      <Header $child={track.child} $last={track.last} $tone={track.tone}>
        <FoldButton aria-label={`Fold ${track.name}`}>
          <FoldIcon kind={track.icon} />
        </FoldButton>
        <TrackName>{track.name}</TrackName>
      </Header>
      <MeterPair peak={track.peak} />
    </Row>
  );
};

const mapX = (x: number) => (x - 2) * 0.9725 + 1;
const mapRows: [number[][], number, number, string][] = [
  [spans(kick), 3, 1, "#b33a33"],
  [spans(clap), 4, 2, "#b33a33"],
  [spans(percFx), 6, 2, "#b33a33"],
  [spans(hatMain), 7, 2, "#d9564d"],
  [spans(hat), 8, 2, "#b33a33"],
  [spans(mainLoop), 10, 2, "#62bccb"],
  [spans(reverse), 11, 2, "#5ab3c4"],
  [spans(piano), 12, 2, "#5fc0d1"],
  [spans(bass), 13, 2, "#5fc0d1"],
  [spans(glass), 17, 1, "#e8e384"],
  [spans(vocalReverse), 18, 1, "#e8e384"],
  [spans(crash), 19, 1, "#c9c463"],
  [spans(sweep), 20, 1, "#f2ed85"],
  [fxExtra[0], 21, 1, "#e8e384"],
  [fxExtra[1], 22, 1, "#e8e384"],
];

const OverviewDrawing = () => (
  <OverviewMap viewBox="0 0 2646 24" preserveAspectRatio="none" aria-hidden="true" shapeRendering="crispEdges">
    {[[260, 1296], [1522, 2332]].map(([a, b]) => (
      <rect key={a} x={mapX(a)} y={1} width={(b - a) * 0.9725} height={1} fill="#fff" />
    ))}
    {mapRows.map(([row, y, h, color], r) =>
      row.map(([a, b]) => (
        <rect key={`${r}-${a}`} x={mapX(a)} y={y} width={Math.max(2, (b - a) * 0.9725)} height={h} fill={color} />
      ))
    )}
    {locators.map((l) => (
      <rect key={l.x} x={mapX(l.x) + 1} y={0} width={l.x === 2 ? 2 : 1} height={24} fill="#2a2a2a" />
    ))}
  </OverviewMap>
);

export default function App() {
  return (
    <>
      <Global />
      <Window>
        <Main>
          <OverviewBar>
            <Overview>
              <OverviewDrawing />
              <ViewFrame />
            </Overview>
            <SquareButton>H</SquareButton>
            <SquareButton>W</SquareButton>
          </OverviewBar>

          <Ruler>
            <RulerTrack>
              {gridBars.map((b) => {
                const major = b % 4 === 1;
                return (
                  <React.Fragment key={b}>
                    <Tick $major={major} style={{ left: at(barX(b)) }} />
                    {major && b < 77 && <TickLabel style={{ left: at(barX(b)) }}>{b}</TickLabel>}
                  </React.Fragment>
                );
              })}
            </RulerTrack>
          </Ruler>

          <Arrangement>
            <NavRow>
              <NavLanes>
                <LoopLane>
                  <LoopBrace aria-label="Loop brace">
                    <svg width="16" height="18" viewBox="0 0 16 18" fill="none" stroke="#141414" strokeWidth="1.6">
                      <path d="M0 0L15 9L0 18" />
                    </svg>
                    <svg width="18" height="18" viewBox="0 0 18 18" fill="none" stroke="#141414" strokeWidth="1.6">
                      <path d="M18 0L1 9L18 18" />
                    </svg>
                  </LoopBrace>
                </LoopLane>
                <LocatorLane>
                  <GridLines />
                  {locators.map((l) => (
                    <LocatorButton key={l.x} style={{ left: at(l.x) }}>
                      <svg width="18" height="22" viewBox="0 0 18 22">
                        <path d="M0 1L17 11L0 21Z" fill="#c6c6c6" stroke="#141414" strokeWidth="1.6" />
                      </svg>
                      <LocatorName>{l.name}</LocatorName>
                    </LocatorButton>
                  ))}
                </LocatorLane>
              </NavLanes>
              <NavControls>
                <ControlLine>
                  <PillButton>Del</PillButton>
                </ControlLine>
                <ControlLine>
                  <RoundButton aria-label="Previous locator">
                    <svg width="22" height="22" viewBox="0 0 22 22">
                      <path d="M4 11L11 5V9.8H18V12.2H11V17Z" fill="#555" />
                    </svg>
                  </RoundButton>
                  <RoundButton aria-label="Next locator">
                    <svg width="22" height="22" viewBox="0 0 22 22">
                      <path d="M18 11L11 5V9.8H4V12.2H11V17Z" fill="#000" />
                    </svg>
                  </RoundButton>
                  <ModeButton aria-label="Automation mode">
                    <svg width="16" height="16" viewBox="0 0 16 16">
                      <path d="M4 12L12 4" stroke="#000" strokeWidth="2" />
                      <circle cx="4" cy="12" r="3" />
                      <circle cx="12" cy="4" r="3" />
                    </svg>
                  </ModeButton>
                  <ModeButton aria-label="Lock envelopes">
                    <svg width="16" height="16" viewBox="0 0 16 16">
                      <path d="M4.5 8V5a3.5 3.5 0 0 1 7 0V8" fill="none" stroke="#000" strokeWidth="1.8" />
                      <rect x="1" y="7" width="14" height="8" />
                    </svg>
                  </ModeButton>
                </ControlLine>
              </NavControls>
            </NavRow>

            <TrackList>
              {tracks.map((t) => (
                <TrackRow key={t.name} track={t} />
              ))}
            </TrackList>

            <MasterRow>
              <Lane $height={34} $main>
                <GridLines />
                <GridSize>2/1</GridSize>
              </Lane>
              <Header $tone={red} $gap={18}>
                <FoldButton aria-label="Fold Master">
                  <FoldIcon kind="play" />
                </FoldButton>
                <TrackName>Master</TrackName>
              </Header>
              <MeterPair peak={2} main />
            </MasterRow>

            <LocatorLines>
              {locators.slice(1).map((l) => (
                <LocatorLine key={l.x} style={{ left: at(l.x) }} />
              ))}
            </LocatorLines>
          </Arrangement>

          <TimeRuler>
            <RulerTrack>
              {seconds.map((k) => {
                const x = even(77.7 * k - 1.5);
                const major = k % 3 === 0;
                const total = k * 5;
                const text = `${Math.floor(total / 60)}:${String(total % 60).padStart(2, "0")}`;
                return (
                  <React.Fragment key={k}>
                    <TimeTick $major={major} style={{ left: at(x) }} />
                    {major && <TimeLabel style={{ left: at(x) }}>{text}</TimeLabel>}
                  </React.Fragment>
                );
              })}
            </RulerTrack>
          </TimeRuler>
        </Main>

        <Side>
          <ViewButtons>
            <ViewButton aria-label="Arrangement view">
              <svg width="38" height="38" viewBox="0 0 38 38">
                <path d="M8 11H30M8 19H30M8 27H30" stroke="#fbb03b" strokeWidth="4" />
              </svg>
            </ViewButton>
            <ViewButton aria-label="Session view">
              <svg width="38" height="38" viewBox="0 0 38 38">
                <path d="M11 8V30M19 8V30M27 8V30" stroke="#8f8f8f" strokeWidth="4" />
              </svg>
            </ViewButton>
          </ViewButtons>
          <SideBody>
            <ScrollThumb />
            <Toggles>
              <Toggle>I·O</Toggle>
              <Toggle $on>R</Toggle>
              <Toggle>M</Toggle>
              <Toggle>D</Toggle>
            </Toggles>
          </SideBody>
        </Side>
      </Window>
    </>
  );
}
